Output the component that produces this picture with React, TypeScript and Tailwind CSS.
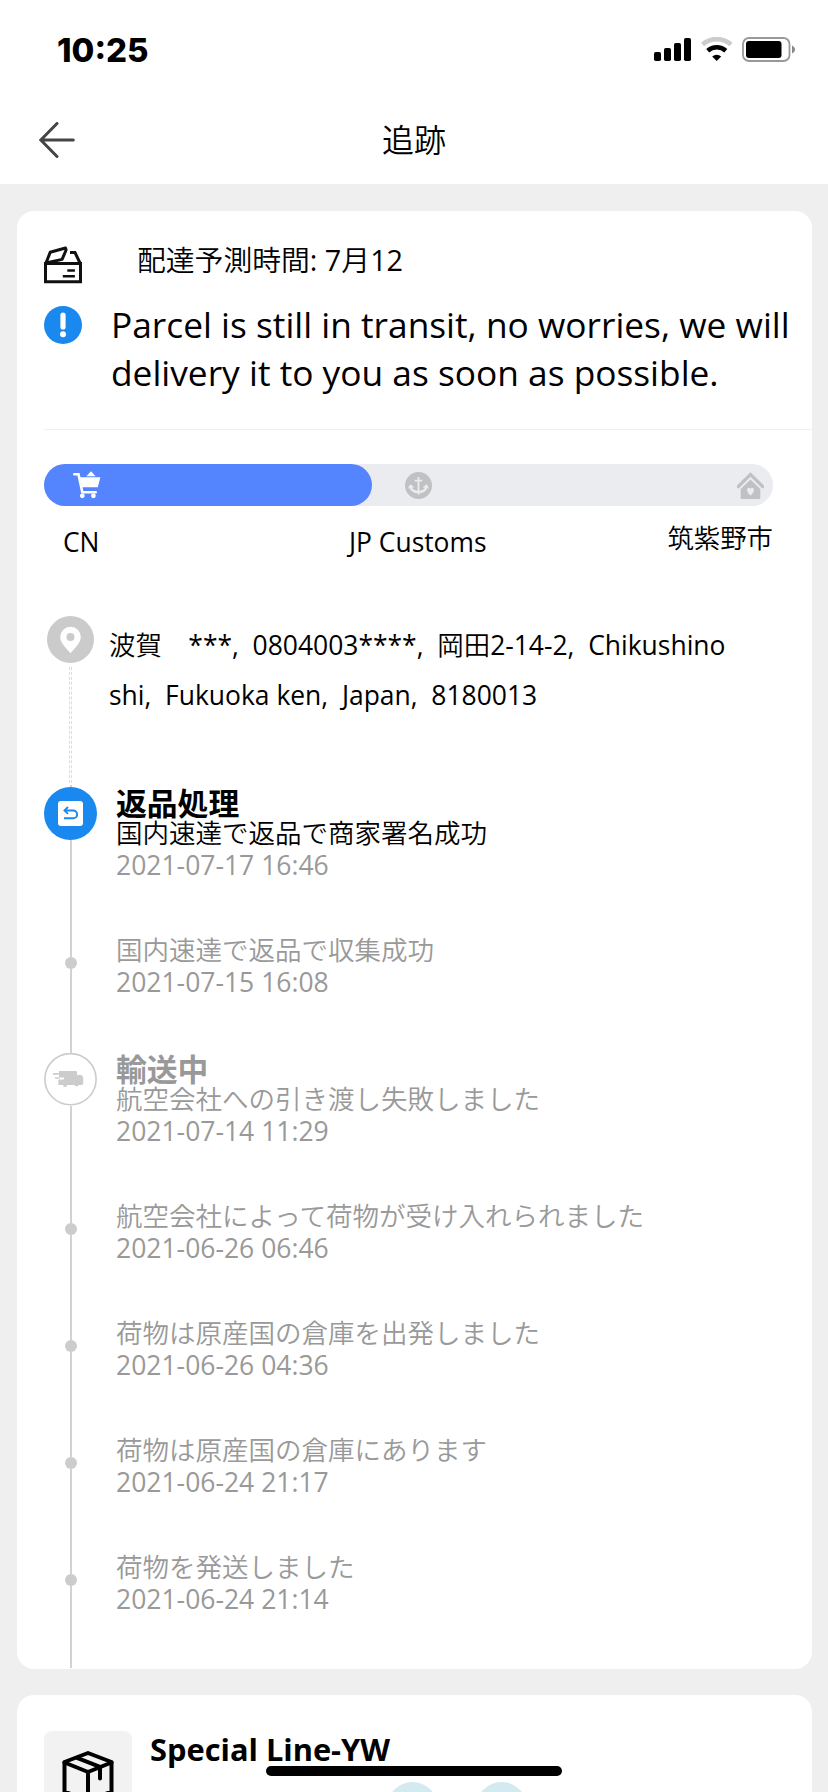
import type { ReactNode } from "react";

type Event = {
  title?: string;
  text: string;
  date: string;
  icon?: ReactNode;
  active?: boolean;
};

const ReturnIcon = () => (
  <svg className="w-[53px] h-[53px]" viewBox="0 0 53 53" fill="none">
    <circle cx="26.5" cy="26.5" r="26.5" fill="#1989f0" />
    <rect x="14" y="14" width="25" height="25" rx="3" fill="#fff" />
    <path d="M21 23.5h8.2a3.8 3.8 0 0 1 0 7.8H20" stroke="#1989f0" strokeWidth="2" />
    <path d="M24 20l-3.6 3.5 3.6 3.3" stroke="#1989f0" strokeWidth="1.8" />
  </svg>
);

const TruckIcon = () => (
  <svg className="w-[53px] h-[53px]" viewBox="0 0 53 53" fill="none">
    <circle cx="26.5" cy="26.2" r="25.6" fill="#fff" stroke="#ccc" strokeWidth="1.6" />
    <path
      d="M15 18h17a1 1 0 0 1 1 1v3h4.5l1.7 2.5v6.5l-1 1h-3.6a2 2 0 0 1-3.8 0H23a2 2 0 0 1-4 0h-4.6v-5.4H20v-2h-5z"
      fill="#ccc"
    />
    <path d="M8.8 20.9h6M11 25h4.5" stroke="#ccc" strokeWidth="1.6" />
  </svg>
);

const PinIcon = () => (
  <svg className="w-[47px] h-[47px]" viewBox="0 0 47 47">
    <circle cx="23.5" cy="23.5" r="23.5" fill="#cbcbcb" />
    <path
      d="M23.5 37.3C19 31.8 13.2 26.6 13.2 21a10.3 10.3 0 0 1 20.6 0c0 5.6-5.8 10.8-10.3 16.3z"
      fill="#fff"
    />
    <circle cx="23.5" cy="21" r="4" fill="#cbcbcb" />
  </svg>
);

const ParcelIcon = () => (
  <svg className="w-[38px] h-[38px]" viewBox="0 0 38 38" fill="none" stroke="#111" strokeWidth="3">
    <path d="M1.5 17.5h35v18.2h-35z" />
    <path d="M2 17L6.2 6.3 21.5 2l.6 2-4 9.4L2 17z" strokeLinejoin="round" />
    <path d="M26 6.5h5l5 10.5" />
    <path d="M23.3 24.5h7.6M18.8 30.2h12.1" strokeWidth="2.6" />
  </svg>
);

const NoticeIcon = () => (
  <svg className="w-[38px] h-[38px]" viewBox="0 0 38 38">
    <circle cx="19" cy="19" r="19" fill="#1989f0" />
    <rect x="16.4" y="6.6" width="5.2" height="17" rx="2.6" fill="#fff" />
    <circle cx="19" cy="28.3" r="3" fill="#fff" />
  </svg>
);

const CartIcon = () => (
  <svg className="w-7 h-7" viewBox="0 0 28 28" fill="#fff">
    <path d="M1.3 3.2h4.2l3.8 18h13.4" fill="none" stroke="#fff" strokeWidth="2.6" strokeLinecap="round" />
    <path d="M6 6.2h21.3l-2.5 10H8z" />
    <path d="M18 .2l4.6 5h-9.2z" />
    <circle cx="9.3" cy="24.8" r="2.4" />
    <circle cx="20.4" cy="24.8" r="2.4" />
  </svg>
);

const AnchorIcon = () => (
  <svg className="w-[27px] h-[27px]" viewBox="0 0 27 27" fill="none" stroke="#ebecef">
    <circle cx="13.5" cy="13.5" r="13.5" fill="#c0c1c2" stroke="none" />
    <path d="M13.5 5v17.5M9.7 8.7h7.6" strokeWidth="1.8" />
    <path d="M5.4 14.8c1.2 3.6 4.2 5.2 8.1 5.2s6.9-1.6 8.1-5.2" strokeWidth="2.4" />
    <path d="M3 16.5l2.2-4.3 4.2 3zM24 16.5l-2.2-4.3-4.2 3z" fill="#ebecef" stroke="none" />
  </svg>
);

const HouseIcon = () => (
  <svg className="w-[27px] h-[27px]" viewBox="0 0 27 27">
    <path d="M1.3 14.5L13.5 2.4l12.2 12.1" fill="none" stroke="#c0c1c2" strokeWidth="3.2" strokeLinecap="round" />
    <path d="M13.5 7.5l9.8 9.6V26a1 1 0 0 1-1 1H4.7a1 1 0 0 1-1-1v-8.9z" fill="#c0c1c2" />
    <path d="M13.5 23.5c-2-1.8-3.4-3.7-3.4-5.5 0-2.8 2.8-3 3.4-1.2.6-1.8 3.4-1.6 3.4 1.2 0 1.8-1.4 3.7-3.4 5.5z" fill="#ebecef" />
  </svg>
);

const BoxIcon = () => (
  <svg
    className="w-[52px] h-[58px]"
    viewBox="0 0 52 58"
    fill="none"
    stroke="#000"
    strokeWidth="4"
    strokeLinejoin="round"
    strokeLinecap="round"
  >
    <path d="M26 2l23.5 9v29.5L26 50 2.5 40.5V11z" />
    <path d="M2.5 11.5L26 21l23.5-9.5M26 21v29M15 6.8l23 9v11.7" />
  </svg>
);

const events: Event[] = [
  {
    title: "返品処理",
    text: "国内速達で返品で商家署名成功",
    date: "2021-07-17 16:46",
    icon: <ReturnIcon />,
    active: true,
  },
  { text: "国内速達で返品で収集成功", date: "2021-07-15 16:08" },
  {
    title: "輸送中",
    text: "航空会社への引き渡し失敗しました",
    date: "2021-07-14 11:29",
    icon: <TruckIcon />,
  },
  { text: "航空会社によって荷物が受け入れられました", date: "2021-06-26 06:46" },
  { text: "荷物は原産国の倉庫を出発しました", date: "2021-06-26 04:36" },
  { text: "荷物は原産国の倉庫にあります", date: "2021-06-24 21:17" },
  { text: "荷物を発送しました", date: "2021-06-24 21:14" },
];

const StatusBar = () => (
  <div className="flex justify-between items-center pt-3 pr-[33px] pl-[57px] h-[88px]">
    <span className="text-[33px] leading-[38px] font-extrabold font-['Inter',sans-serif]">10:25</span>
    <svg className="w-[142px] h-[26px]" viewBox="0 0 142 26">
      <rect x="1" y="15" width="7" height="9" rx="1.8" />
      <rect x="11" y="11" width="7" height="13" rx="1.8" />
      <rect x="21" y="6" width="7" height="18" rx="1.8" />
      <rect x="31" y="1" width="7" height="23" rx="1.8" />
      <path d="M49.5 7.5a21.5 21.5 0 0 1 28.5 0" fill="none" stroke="#ccc" strokeWidth="4.6" />
      <path d="M54.7 13.7a13.8 13.8 0 0 1 18.1 0" fill="none" stroke="#000" strokeWidth="4.6" />
      <path d="M63.7 24l-4.5-4.6a6.8 6.8 0 0 1 9 0z" />
      <rect x="90" y="1" width="46.5" height="23" rx="6" fill="none" stroke="#999" strokeWidth="1.8" />
      <rect x="93" y="4" width="35.5" height="17" rx="3" />
      <path d="M139 8.5c1.8.8 3 2.3 3 4s-1.2 3.2-3 4z" fill="#888" />
    </svg>
  </div>
);

const TitleBar = () => (
  <div className="grid grid-cols-3 items-center pt-2 h-24 px-[39px]">
    <svg className="w-9 h-9" viewBox="0 0 36 36" fill="none" stroke="#444" strokeWidth="3" strokeLinecap="round">
      <path d="M18 1.5L1.8 18 18 34.5M2.5 18h31.8" />
    </svg>
    <h1 className="text-center text-[32px] leading-10 font-[350]">追跡</h1>
  </div>
);

const EventRow = ({ title, text, date, icon, active }: Event) => (
  <li className="flex">
    <div className="flex flex-col items-center w-[53px] mr-[19px]">
      <span className={title ? "w-0.5 h-0.5 bg-[#d2d2d2]" : "w-0.5 h-[23px] bg-[#d2d2d2]"} />
      {icon || <span className="w-3 h-3 rounded-full bg-[#ccc]" />}
      <span className="flex-1 w-0.5 bg-[#d2d2d2]" />
    </div>
    <div className={active ? "pb-[53px] text-black" : "pb-[53px] text-[#999]"}>
      {title && <h2 className="pt-0.5 h-8 text-[30.8px] leading-8 font-bold">{title}</h2>}
      <p className="text-[26.5px] leading-8 font-[350]">{text}</p>
      <p className="text-[26.5px] leading-8 text-[#999]">{date}</p>
    </div>
  </li>
);

const App = () => (
  <div className="relative w-[828px] h-[1792px] overflow-hidden bg-[#efefef] text-black font-['Open_Sans','Noto_Sans_CJK_JP',sans-serif]">
    <header className="h-[184px] bg-white">
      <StatusBar />
      <TitleBar />
    </header>

    <main className="flex flex-col gap-[26px] pt-[27px] pl-[17px] pr-4">
      <section className="h-[1458px] rounded-[17px] bg-white pl-[27px] overflow-hidden">
        <div className="h-[219px] border-b border-[#efefef]">
          <div className="flex pt-[35px]">
            <ParcelIcon />
            <p className="ml-[55px] -mt-[5px] h-[43px] text-[28.8px] leading-[38px]">
              <span className="font-[350]">配達予測時間</span>: 7<span className="font-[350]">月</span>12
            </p>
          </div>
          <div className="flex mt-[22px]">
            <NoticeIcon />
            <p className="ml-[29px] -mt-1.5 text-[35.3px] leading-[48px] whitespace-nowrap">
              Parcel is still in transit, no worries, we will
              <br />
              delivery it to you as soon as possible.
            </p>
          </div>
        </div>

        <div className="flex justify-between items-center mt-[34px] w-[729px] h-[42px] rounded-full bg-[#ebecef]">
          <div className="flex items-center pl-[29px] w-[328px] h-full rounded-full bg-[#5584ff]">
            <CartIcon />
          </div>
          <div className="flex flex-1 justify-between pr-[9px] pl-[33px]">
            <AnchorIcon />
            <HouseIcon />
          </div>
        </div>
        <div className="flex justify-between pt-[20px] pl-[19px] w-[729px] h-[110px] text-[26.4px] leading-8">
          <p className="w-[286px]">CN</p>
          <p className="flex-1">JP Customs</p>
          <p className="-mt-1 font-[350]">筑紫野市</p>
        </div>

        <div className="flex h-[169px]">
          <div className="flex flex-col items-center w-[53px]">
            <PinIcon />
            <span className="mt-1 mb-0.5 w-[3px] flex-1 border-x border-dashed border-[#dcdcdc]" />
          </div>
          <p className="pt-1 ml-3 text-[26.45px] leading-[50px] whitespace-pre">
            <span className="font-[350]">波賀　</span>
            {"***,  0804003****,  "}
            <span className="font-[350]">岡田</span>
            {"2-14-2,  Chikushino\nshi,  Fukuoka ken,  Japan,  8180013"}
          </p>
        </div>

        <ul>
          {events.map((event) => (
            <EventRow key={event.date} {...event} />
          ))}
        </ul>
      </section>

      <section className="flex h-[200px] rounded-[17px] bg-white pt-9 pl-[27px]">
        <div className="flex justify-center pt-5 w-[88px] h-[88px] rounded-lg bg-[#f2f2f2]">
          <BoxIcon />
        </div>
        <div className="ml-[18px]">
          <h2 className="-mt-0.5 text-[30.8px] leading-10 font-bold">Special Line-YW</h2>
          <div className="flex gap-[38px] mt-[13px] ml-[237px]">
            <span className="w-[51px] h-[51px] rounded-full bg-[#d3eaf0]" />
            <span className="w-[51px] h-[51px] rounded-full bg-[#d3eaf0]" />
          </div>
        </div>
      </section>
    </main>

    <div className="absolute bottom-4 left-[266px] w-[296px] h-2.5 rounded-full bg-black" />
  </div>
);

export default App;
